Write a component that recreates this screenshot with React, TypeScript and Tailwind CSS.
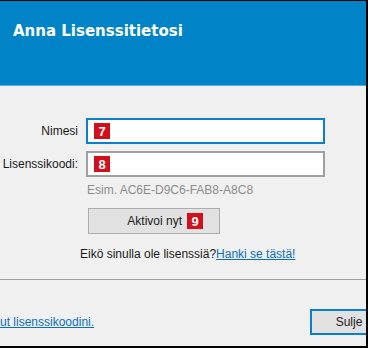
import { type ReactNode } from 'react'

function Badge({ n }: { n: number }) {
  return (
    <span className="inline-flex h-4 w-4 shrink-0 items-center justify-center bg-[#d2101b] text-[13px] font-bold leading-none text-white">
      {n}
    </span>
  )
}

function Field({ label, focused, badge }: { label: string; focused?: boolean; badge: ReactNode }) {
  return (
    <>
      <div className="flex h-[26px] items-center justify-end text-[12px] text-[#1a1a1a]">{label}</div>
      <div
        className={`flex h-[26px] w-[239px] items-center bg-white pl-[6px] ${
          focused ? 'border-2 border-[#0a7fd0]' : 'border-2 border-[#a0a0a0]'
        }`}
      >
        {badge}
      </div>
    </>
  )
}

export default function App() {
  return (
    <div
      className="flex h-[348px] w-[368px] flex-col overflow-hidden border-t border-r-2 border-b-2 border-black bg-[#f0f0f0]"
      style={{ fontFamily: '"Liberation Sans", Arial, sans-serif' }}
    >
      {/* Header */}
      <div className="h-[85px] shrink-0 border-b border-[#4fb0e0] bg-[#0084c8] pl-[13px] pt-[19px]">
        <h1
          className="text-[15px] font-bold text-white"
          style={{ fontFamily: '"DejaVu Sans", Verdana, sans-serif' }}
        >
          Anna Lisenssitietosi
        </h1>
      </div>

      {/* Form */}
      <div className="shrink-0 pt-[32px]">
        <div className="grid grid-cols-[78px_239px] gap-x-[8px] gap-y-[7px]">
          <Field label="Nimesi" focused badge={<Badge n={7} />} />
          <Field label="Lisenssikoodi:" badge={<Badge n={8} />} />
        </div>
        <div className="mt-[5px] pl-[87px] text-[12px] leading-4 text-[#8c8c8c]">Esim. AC6E-D9C6-FAB8-A8C8</div>
        <div className="mt-[10px] pl-[88px]">
          <button className="flex h-[26px] w-[132px] items-center justify-end gap-[5px] border border-[#adadad] bg-[#e1e1e1] pr-[16px] text-[12px] text-[#1a1a1a]">
            Aktivoi nyt <Badge n={9} />
          </button>
        </div>
        <p className="mt-[12px] pl-[80px] text-[12px] leading-4 text-[#1a1a1a]">
          Eikö sinulla ole lisenssiä?
          <a className="text-[#0a6fc4] underline">Hanki se tästä!</a>
        </p>
      </div>

      {/* Separator */}
      <div className="mt-[17px] h-px shrink-0 bg-[#a0a0a0]" />

      {/* Footer */}
      <div className="flex flex-1 items-start justify-between overflow-hidden pt-[29px]">
        <a className="mt-[5px] text-[12px] leading-4 text-[#0a6fc4] underline">ut lisenssikoodini.</a>
        <button className="h-[26px] w-[78px] shrink-0 translate-x-[22px] border-2 border-[#0a7fd0] bg-[#e1e1e1] text-[12px] text-[#1a1a1a]">
          Sulje
        </button>
      </div>
    </div>
  )
}
